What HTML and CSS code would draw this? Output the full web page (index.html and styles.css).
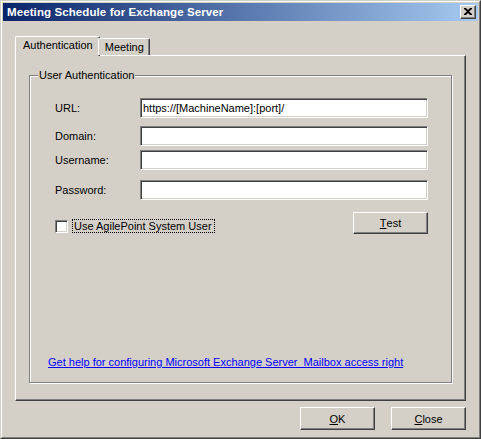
FILE: index.html
```html
<!DOCTYPE html>
<html>
<head>
<meta charset="utf-8">
<link rel="stylesheet" href="styles.css">
</head>
<body>
<div class="window">
  <div class="frame">
    <div class="titlebar">
      <span class="title">Meeting Schedule for Exchange Server</span>
      <span class="closebtn"><svg width="8" height="7" viewBox="0 0 8 7"><path d="M0 0h2l2 2 2-2h2v1L5 3.5 8 6v1H6L4 5 2 7H0V6l3-2.5L0 1z" fill="#000"/></svg></span>
    </div>
    <div class="client">
      <div class="tabs">
        <div class="tab selected">Authentication</div>
        <div class="tab">Meeting</div>
      </div>
      <div class="panel">
        <fieldset class="group">
          <legend>User Authentication</legend>
          <div class="row r-url">
            <label class="lbl">URL:</label>
            <div class="input">https://[MachineName]:[port]/</div>
          </div>
          <div class="row r-domain">
            <label class="lbl">Domain:</label>
            <div class="input"></div>
          </div>
          <div class="row r-user">
            <label class="lbl">Username:</label>
            <div class="input"></div>
          </div>
          <div class="row r-pass">
            <label class="lbl">Password:</label>
            <div class="input"></div>
          </div>
          <div class="checkrow">
            <div class="check">
              <span class="box"></span>
              <span class="checklabel">Use AgilePoint System User</span>
            </div>
            <div class="btn test"><u>T</u>est</div>
          </div>
          <a class="link" href="#">Get help for configuring Microsoft Exchange Server&nbsp; Mailbox access right</a>
        </fieldset>
      </div>
      <div class="footer">
        <div class="btn"><u>O</u>K</div>
        <div class="btn"><u>C</u>lose</div>
      </div>
    </div>
  </div>
</div>
</body>
</html>
```

FILE: styles.css
```css
* { box-sizing: border-box; }
html, body { margin: 0; padding: 0; background: #d4d0c8; }
body {
  font-family: "Liberation Sans", Arial, sans-serif;
  font-size: 11px;
  color: #000;
}
.window {
  width: 481px;
  height: 439px;
  border: 1px solid;
  border-color: #d4d0c8 #404040 #404040 #d4d0c8;
  display: flex;
  flex-direction: column;
}
.frame {
  flex: 1;
  border: 1px solid;
  border-color: #fff #808080 #808080 #fff;
  padding: 1px;
  display: flex;
  flex-direction: column;
}
.titlebar {
  height: 18px;
  background: linear-gradient(to right, #0a246a, #a6caf0);
  display: flex;
  align-items: center;
  justify-content: space-between;
  padding: 0 2px 0 4px;
}
.title {
  color: #fff;
  font-weight: bold;
  font-size: 11.5px;
  letter-spacing: 0.1px;
  white-space: nowrap;
}
.closebtn {
  width: 16px;
  height: 14px;
  background: #d4d0c8;
  border: 1px solid;
  border-color: #fff #404040 #404040 #fff;
  box-shadow: inset -1px -1px 0 #808080;
  display: flex;
  align-items: center;
  justify-content: center;
  padding-bottom: 1px;
}
.client {
  flex: 1;
  display: flex;
  flex-direction: column;
  padding: 15px 12px 0 12px;
}
.tabs {
  height: 19px;
  display: flex;
  align-items: flex-end;
  position: relative;
  z-index: 1;
}
.tab {
  height: 17px;
  padding: 2px 5px 0 6px;
  border: 1px solid;
  border-bottom: none;
  border-color: #fff #404040 #404040 #fff;
  box-shadow: inset -1px 0 0 #808080;
  border-radius: 2px 2px 0 0;
  background: #d4d0c8;
  white-space: nowrap;
}
.tab.selected {
  height: 20px;
  margin-bottom: -1px;
  padding: 2px 6px 0 7px;
  margin-right: -2px;
}
.panel {
  height: 346px;
  border: 1px solid;
  border-color: #fff #404040 #404040 #fff;
  box-shadow: inset -1px -1px 0 #808080;
  padding: 13px 13px 17px 13px;
  display: flex;
}
.group {
  flex: 1;
  margin: 0;
  padding: 0 0 14px 0;
  min-width: 0;
  border: 1px solid #808080;
  box-shadow: 1px 1px 0 #fff, inset 1px 1px 0 #fff;
  display: flex;
  flex-direction: column;
}
.group legend {
  margin-left: 8px;
  padding: 0 1px;
  background: #d4d0c8;
  line-height: 13px;
}
.row {
  display: flex;
  align-items: center;
  height: 20px;
  padding-left: 25px;
}
.r-url { margin-top: 16px; }
.r-domain { margin-top: 8px; }
.r-user { margin-top: 4px; }
.r-pass { margin-top: 10px; }
.lbl { width: 85px; }
.input {
  width: 288px;
  height: 20px;
  background: #fff;
  border: 1px solid;
  border-color: #808080 #fff #fff #808080;
  box-shadow: inset 1px 1px 0 #404040, inset -1px -1px 0 #d4d0c8;
  padding: 3px 0 0 2px;
  white-space: nowrap;
  overflow: hidden;
}
.checkrow {
  display: flex;
  justify-content: space-between;
  align-items: flex-start;
  padding: 0 23px 0 25px;
  margin-top: 12px;
}
.check {
  display: flex;
  align-items: center;
  margin-top: 7px;
}
.box {
  width: 13px;
  height: 13px;
  background: #fff;
  border: 1px solid;
  border-color: #808080 #fff #fff #808080;
  box-shadow: inset 1px 1px 0 #404040, inset -1px -1px 0 #d4d0c8;
}
.checklabel {
  margin-left: 4px;
  padding: 0 2px 0 1px;
  height: 14px;
  line-height: 12px;
  border: 1px dotted #000;
}
.btn {
  width: 75px;
  height: 23px;
  border: 1px solid;
  border-color: #fff #404040 #404040 #fff;
  box-shadow: inset -1px -1px 0 #808080;
  display: flex;
  align-items: center;
  justify-content: center;
  background: #d4d0c8;
}
.btn.test { height: 22px; }
.link {
  margin-top: auto;
  margin-left: 18px;
  margin-bottom: 0;
  color: #0000ff;
  align-self: flex-start;
  white-space: nowrap;
}
.footer {
  display: flex;
  justify-content: flex-end;
  gap: 16px;
  margin-top: 6px;
}
```
